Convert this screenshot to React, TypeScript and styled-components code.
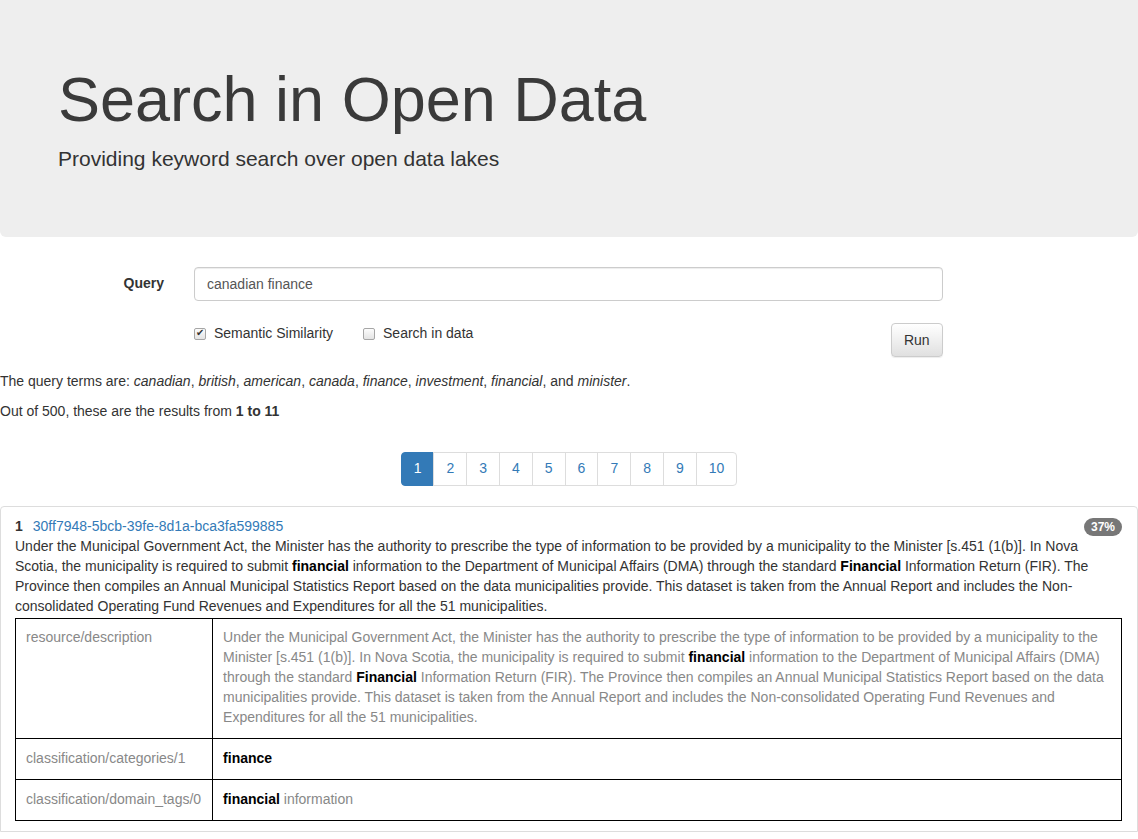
import React from 'react'
import styled, { createGlobalStyle } from 'styled-components'

const GlobalStyle = createGlobalStyle`
    html, body {
        margin: 0;
        padding: 0;
        overflow-x: hidden;
    }
    body {
        font-family: "Liberation Sans", Arial, sans-serif;
        font-size: 14px;
        line-height: 1.42857;
        color: #333;
        background: #fff;
    }
    * {
        box-sizing: border-box;
    }
`

const Jumbotron = styled.div`
    background: #eee;
    padding: 45px 58px 48px;
    border-radius: 0 0 6px 6px;
    margin-bottom: 30px;
    h1 {
        font-size: 63px;
        font-weight: 500;
        line-height: 1.1;
        margin: 20px 0 10px;
        color: #3a3a3a;
    }
    p {
        font-size: 21px;
        font-weight: 200;
        margin: 0 0 15px;
    }
`

const FormRow = styled.div`
    display: grid;
    grid-template-columns: 179px 778.67px;
    margin-bottom: 15px;
`

const Label = styled.label`
    font-weight: bold;
    text-align: right;
    padding: 7px 15px 0 0;
`

const Field = styled.div<{ $split?: boolean }>`
    padding: 0 15px;
    display: flex;
    justify-content: ${(p) => (p.$split ? 'space-between' : 'flex-start')};
    align-items: flex-start;
`

const TextInput = styled.input`
    width: 100%;
    height: 34px;
    padding: 6px 12px;
    font-family: inherit;
    font-size: 14px;
    color: #555;
    border: 1px solid #ccc;
    border-radius: 4px;
    box-shadow: inset 0 1px 1px rgba(0, 0, 0, 0.075);
    outline: none;
`

const Checks = styled.div`
    display: flex;
    gap: 30px;
    padding-top: 8px;
`

const CheckLabel = styled.label`
    display: flex;
    align-items: center;
    gap: 8px;
`

const CheckBox = styled.input`
    appearance: none;
    position: relative;
    margin: 0;
    width: 12px;
    height: 12px;
    border: 1px solid #a6a6a6;
    border-radius: 2px;
    background: linear-gradient(#fcfcfc, #e4e4e4);
    &:checked::after {
        content: '✔';
        position: absolute;
        left: 1px;
        top: -3px;
        font-size: 10px;
        line-height: 14px;
        color: #333;
    }
`

const RunButton = styled.button`
    margin-top: 7px;
    height: 34px;
    padding: 6px 12px;
    font-family: inherit;
    font-size: 14px;
    color: #333;
    border: 1px solid #ccc;
    border-radius: 4px;
    background: linear-gradient(#fff 0, #e0e0e0 100%);
    box-shadow: inset 0 1px 0 rgba(255, 255, 255, 0.15), 0 1px 1px rgba(0, 0, 0, 0.075);
`

const Summary = styled.p`
    margin: 0 0 10px;
`

const Pagination = styled.ul`
    display: flex;
    justify-content: center;
    list-style: none;
    margin: 30px 0 20px;
    padding: 0;
`

const PageItem = styled.li<{ $active?: boolean }>`
    padding: 6px 12px;
    margin-left: -1px;
    border: 1px solid ${(p) => (p.$active ? '#337ab7' : '#ddd')};
    background: ${(p) => (p.$active ? '#337ab7' : '#fff')};
    color: ${(p) => (p.$active ? '#fff' : '#337ab7')};
    &:first-child {
        margin-left: 0;
        border-radius: 4px 0 0 4px;
    }
    &:last-child {
        border-radius: 0 4px 4px 0;
    }
`

const ResultItem = styled.div`
    border: 1px solid #ddd;
    border-radius: 4px 4px 0 0;
    padding: 10px 15px 10px 14px;
`

const ResultTitle = styled.div`
    display: flex;
    align-items: center;
    b {
        margin-right: 10px;
    }
    a {
        color: #337ab7;
        text-decoration: none;
    }
`

const Badge = styled.span`
    margin-left: auto;
    background: #777;
    color: #fff;
    font-size: 12px;
    font-weight: bold;
    line-height: 1;
    padding: 3px 7px;
    border-radius: 10px;
`

const Hit = styled.b`
    color: #000;
`

const FieldTable = styled.table`
    width: 100%;
    margin-top: 1px;
    border-collapse: separate;
    border-spacing: 0;
    border-top: 1px solid #000;
    border-left: 1px solid #000;
    td {
        border-right: 1px solid #000;
        border-bottom: 1px solid #000;
        padding: 9px 10px 10px;
        vertical-align: top;
        color: #888;
    }
    tr + tr td {
        padding-top: 10px;
    }
    td:first-child {
        white-space: nowrap;
        width: 1px;
        padding-right: 11px;
    }
`

const pages = [1, 2, 3, 4, 5, 6, 7, 8, 9, 10]
const terms = ['canadian', 'british', 'american', 'canada', 'finance', 'investment', 'financial']

const Description = () => (
    <>
        Under the Municipal Government Act, the Minister has the authority to prescribe the type of information to be
        provided by a municipality to the Minister [s.451 (1(b)]. In Nova Scotia, the municipality is required to submit{' '}
        <Hit>financial</Hit> information to the Department of Municipal Affairs (DMA) through the standard{' '}
        <Hit>Financial</Hit> Information Return (FIR). The Province then compiles an Annual Municipal Statistics Report
        based on the data municipalities provide. This dataset is taken from the Annual Report and includes the
        Non-consolidated Operating Fund Revenues and Expenditures for all the 51 municipalities.
    </>
)

const App = () => {
    return (
        <>
            <GlobalStyle />
            <Jumbotron>
                <h1>Search in Open Data</h1>
                <p>Providing keyword search over open data lakes</p>
            </Jumbotron>
            <FormRow>
                <Label>Query</Label>
                <Field>
                    <TextInput defaultValue="canadian finance" />
                </Field>
            </FormRow>
            <FormRow>
                <div />
                <Field $split>
                    <Checks>
                        <CheckLabel>
                            <CheckBox type="checkbox" defaultChecked />
                            Semantic Similarity
                        </CheckLabel>
                        <CheckLabel>
                            <CheckBox type="checkbox" />
                            Search in data
                        </CheckLabel>
                    </Checks>
                    <RunButton>Run</RunButton>
                </Field>
            </FormRow>
            <Summary>
                The query terms are:{' '}
                {terms.map((t) => (
                    <React.Fragment key={t}>
                        <i>{t}</i>,{' '}
                    </React.Fragment>
                ))}
                and <i>minister</i>.
            </Summary>
            <Summary>
                Out of 500, these are the results from <b>1 to 11</b>
            </Summary>
            <Pagination>
                {pages.map((n) => (
                    <PageItem key={n} $active={n === 1}>
                        {n}
                    </PageItem>
                ))}
            </Pagination>
            <ResultItem>
                <ResultTitle>
                    <b>1</b>
                    <a href="#">30ff7948-5bcb-39fe-8d1a-bca3fa599885</a>
                    <Badge>37%</Badge>
                </ResultTitle>
                <div>
                    <Description />
                </div>
                <FieldTable>
                    <tbody>
                        <tr>
                            <td>resource/description</td>
                            <td>
                                <Description />
                            </td>
                        </tr>
                        <tr>
                            <td>classification/categories/1</td>
                            <td>
                                <Hit>finance</Hit>
                            </td>
                        </tr>
                        <tr>
                            <td>classification/domain_tags/0</td>
                            <td>
                                <Hit>financial</Hit> information
                            </td>
                        </tr>
                    </tbody>
                </FieldTable>
            </ResultItem>
        </>
    )
}

export default App
